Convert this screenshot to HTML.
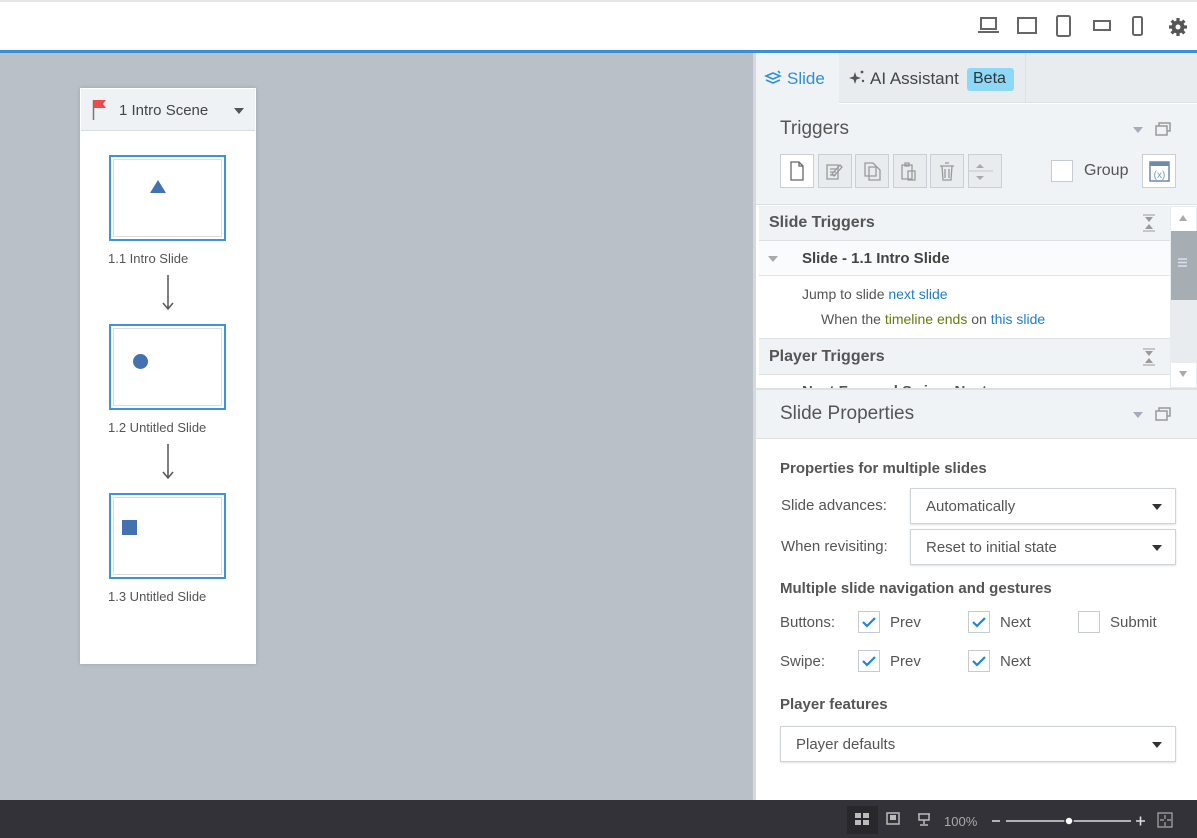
<!DOCTYPE html>
<html><head><meta charset="utf-8"><style>
*{box-sizing:border-box;margin:0;padding:0}
body{width:1197px;height:838px;overflow:hidden;position:relative;font-family:"Liberation Sans",sans-serif;color:#444;background:#fff}
.a{position:absolute}
.t{position:absolute;white-space:nowrap}
.btn{position:absolute;top:154px;width:34px;height:34px;border:1px solid #c9cfd4;background:#e9ecef}
.cb{position:absolute;width:22px;height:22px;border:1px solid #c5cbd0;background:#fff}
.sel{position:absolute;left:910px;width:266px;height:36px;border:1px solid #cfd4d8;background:#fff;font-size:15px;color:#555;padding:9px 15px;box-shadow:0 1px 2px rgba(0,0,0,.12)}
.arr{position:absolute;right:13px;top:15px;border-left:5px solid transparent;border-right:5px solid transparent;border-top:6px solid #333}
</style></head><body>
<!-- top bar -->
<div class="a" style="left:0;top:0;width:1197px;height:2px;background:#e4e6e8"></div>
<div class="a" style="left:0;top:50px;width:1197px;height:3px;background:#3a8fd8"></div>
<svg class="a" style="left:975px;top:12px" width="215" height="28" fill="none" stroke="#666" stroke-width="2">
<rect x="6" y="6" width="15" height="11"/><path d="M3 20h21"/>
<rect x="43" y="6" width="18" height="15"/>
<rect x="82" y="4" width="13" height="20" rx="1.5"/>
<rect x="119" y="9" width="16" height="9"/>
<rect x="158" y="5" width="9" height="18" rx="1.5"/>
<g transform="translate(203,15)" fill="#555" stroke="none"><circle r="6.5"/><g stroke="#555" stroke-width="3.2"><path d="M0-9V9M-9 0H9M-6.4-6.4L6.4 6.4M6.4-6.4L-6.4 6.4"/></g><circle r="2.5" fill="#fff"/></g>
</svg>
<!-- canvas -->
<div class="a" style="left:0;top:53px;width:753px;height:747px;background:#b9c0c8"></div>
<div class="a" style="left:80px;top:88px;width:176px;height:576px;background:#fff;box-shadow:0 0 4px rgba(0,0,0,.15)"></div>
<div class="a" style="left:81px;top:89px;width:174px;height:42px;background:#eef2f5;border-bottom:1px solid #d8dde1"></div>
<svg class="a" style="left:92px;top:99px" width="16" height="22"><path d="M1.5 1v20" stroke="#777" stroke-width="1.5"/><path d="M2 1h12l-3 4 3 4H2z" fill="#e84c4c"/></svg>
<div class="t" style="left:119px;top:102px;font-size:15px;color:#444">1 Intro Scene</div>
<div class="a" style="left:234px;top:108px;border-left:5px solid transparent;border-right:5px solid transparent;border-top:6px solid #555"></div>
<div class="a" style="left:109px;top:155px;width:117px;height:86px;border:2px solid #3d94dc;background:#fff"><div class="a" style="left:2px;top:2px;right:2px;bottom:2px;border:1px solid #ddd"></div></div>
<div class="a" style="left:150px;top:180px;border-left:8px solid transparent;border-right:8px solid transparent;border-bottom:13px solid #4472b0"></div>
<div class="t" style="left:108px;top:251px;font-size:13px;color:#555">1.1 Intro Slide</div>
<svg class="a" style="left:162px;top:275px" width="12" height="38"><path d="M6 0v34M1 28l5 6 5-6" stroke="#555" stroke-width="1.5" fill="none"/></svg>
<div class="a" style="left:109px;top:324px;width:117px;height:86px;border:2px solid #3d94dc;background:#fff"><div class="a" style="left:2px;top:2px;right:2px;bottom:2px;border:1px solid #ddd"></div></div>
<div class="a" style="left:133px;top:354px;width:15px;height:15px;border-radius:50%;background:#4472b0"></div>
<div class="t" style="left:108px;top:420px;font-size:13px;color:#555">1.2 Untitled Slide</div>
<svg class="a" style="left:162px;top:444px" width="12" height="38"><path d="M6 0v34M1 28l5 6 5-6" stroke="#555" stroke-width="1.5" fill="none"/></svg>
<div class="a" style="left:109px;top:493px;width:117px;height:86px;border:2px solid #3d94dc;background:#fff"><div class="a" style="left:2px;top:2px;right:2px;bottom:2px;border:1px solid #ddd"></div></div>
<div class="a" style="left:122px;top:520px;width:15px;height:15px;background:#4472b0"></div>
<div class="t" style="left:108px;top:589px;font-size:13px;color:#555">1.3 Untitled Slide</div>
<!-- right panel -->
<div class="a" style="left:753px;top:53px;width:444px;height:747px;background:#fff;border-left:3px solid #d6dade"></div>
<div class="a" style="left:756px;top:53px;width:441px;height:50px;background:#e8ecef;border-bottom:1px solid #dde1e4"></div>
<div class="a" style="left:756px;top:53px;width:83px;height:51px;background:#eff3f6"></div>
<div class="a" style="left:1025px;top:53px;width:1px;height:50px;background:#dde1e4"></div>
<svg class="a" style="left:764px;top:70px" width="18" height="16" fill="none" stroke="#2f8fd8" stroke-width="1.6"><path d="M2 6l7-3 7 3-7 3z M2 10l7 3 7-3 M14 1l2 2"/></svg>
<div class="t" style="left:787px;top:69px;font-size:17px;color:#2f8fd8">Slide</div>
<svg class="a" style="left:848px;top:69px" width="18" height="18" fill="#555"><path d="M7 3l1.5 4.5L13 9l-4.5 1.5L7 15l-1.5-4.5L1 9l4.5-1.5z"/><circle cx="14" cy="3" r="1.4"/><circle cx="15" cy="12" r="1.2"/></svg>
<div class="t" style="left:870px;top:69px;font-size:17px;color:#444">AI Assistant</div>
<div class="a" style="left:967px;top:68px;width:47px;height:23px;background:#8ed8f7;border-radius:3px;font-size:16px;color:#333;padding:2px 0 0 6px">Beta</div>
<div class="a" style="left:756px;top:104px;width:441px;height:100px;background:#eff3f6"></div>
<div class="t" style="left:780px;top:118px;font-size:19px;color:#555">Triggers</div>
<div class="a" style="left:1133px;top:127px;border-left:5px solid transparent;border-right:5px solid transparent;border-top:6px solid #aab"></div>
<svg class="a" style="left:1155px;top:121px" width="16" height="16" fill="none" stroke="#999" stroke-width="1.5"><rect x="1" y="5" width="11" height="9"/><path d="M4 5V2h11v8h-3"/></svg>
<div class="btn" style="left:780px;background:#fff"></div>
<div class="btn" style="left:818px"></div>
<div class="btn" style="left:855px"></div>
<div class="btn" style="left:893px"></div>
<div class="btn" style="left:930px"></div>
<div class="btn" style="left:968px"></div>
<svg class="a" style="left:780px;top:154px" width="224" height="34" fill="none" stroke="#666" stroke-width="1.3">
<path d="M11 8h8l4 4v14H11z M19 8v4h4"/>
<path d="M47 11h11v14H47z M50 15h6M50 18h6M50 21h6" stroke="#999"/><path d="M52 20l8-9 2 2-8 9z" stroke="#999"/>
<path d="M85 9h8l3 3v10H85z M89 13h8l3 3v10H89z" stroke="#999"/>
<path d="M122 11h10v14h-10z M125 9h4v3h-4z M128 17h7v9h-7z" stroke="#999"/>
<path d="M160 12h14M162 12l1 14h8l1-14M165 9h4M165 15v9M169 15v9" stroke="#999"/>
<path d="M200 10l-4 4h8zM200 26l-4-4h8z" fill="#aaa" stroke="none"/><path d="M189 17h24" stroke="#ccc"/>
</svg>
<div class="cb" style="left:1051px;top:160px"></div>
<div class="t" style="left:1084px;top:162px;font-size:16px;color:#555">Group</div>
<div class="a" style="left:1142px;top:154px;width:34px;height:34px;border:1px solid #c9cfd4;background:#fff"></div>
<svg class="a" style="left:1149px;top:161px" width="21" height="21"><rect x="1" y="1" width="19" height="19" fill="none" stroke="#6f8aa8" stroke-width="1.5"/><rect x="1" y="1" width="19" height="4" fill="#6f8aa8"/><text x="10.5" y="17" font-size="10" text-anchor="middle" fill="#6f9ccc" font-family="Liberation Sans">(x)</text></svg>
<!-- trigger list -->
<div class="a" style="left:756px;top:204px;width:441px;height:186px;background:#fff;border-top:1px solid #dde1e4"></div>
<div class="a" style="left:759px;top:206px;width:411px;height:35px;background:#eff3f6;border-bottom:1px solid #dde1e4"></div>
<div class="t" style="left:769px;top:214px;font-size:16px;font-weight:bold;color:#555">Slide Triggers</div>
<svg class="a" style="left:1142px;top:214px" width="14" height="18" fill="#999"><path d="M1 1h12M1 17h12" stroke="#999"/><path d="M3 3h8l-4 5zM3 15h8l-4-5z"/></svg>
<div class="a" style="left:759px;top:241px;width:411px;height:35px;background:#fafbfc;border-bottom:1px solid #e3e6e9"></div>
<div class="a" style="left:768px;top:256px;border-left:5px solid transparent;border-right:5px solid transparent;border-top:6px solid #aaa"></div>
<div class="t" style="left:802px;top:250px;font-size:15px;font-weight:bold;color:#444">Slide - 1.1 Intro Slide</div>
<div class="t" style="left:802px;top:286px;font-size:14px;color:#555">Jump to slide <span style="color:#1e7fc7">next slide</span></div>
<div class="t" style="left:821px;top:311px;font-size:14px;color:#555">When the <span style="color:#6a7a10">timeline ends</span> on <span style="color:#1e7fc7">this slide</span></div>
<div class="a" style="left:759px;top:338px;width:411px;height:37px;background:#eff3f6;border-top:1px solid #dde1e4;border-bottom:1px solid #dde1e4"></div>
<div class="t" style="left:769px;top:348px;font-size:16px;font-weight:bold;color:#555">Player Triggers</div>
<div class="a" style="left:759px;top:375px;width:411px;height:13px;overflow:hidden"><div class="t" style="left:43px;top:8px;font-size:15px;font-weight:bold;color:#555">Next Forward Swipe: Next</div></div>
<svg class="a" style="left:1142px;top:348px" width="14" height="18" fill="#999"><path d="M1 1h12M1 17h12" stroke="#999"/><path d="M3 3h8l-4 5zM3 15h8l-4-5z"/></svg>
<div class="a" style="left:1170px;top:206px;width:27px;height:182px;background:#e9ecef"></div>
<div class="a" style="left:1171px;top:207px;width:25px;height:24px;background:#fff"></div>
<div class="a" style="left:1179px;top:215px;border-left:4px solid transparent;border-right:4px solid transparent;border-bottom:6px solid #aaa"></div>
<div class="a" style="left:1171px;top:231px;width:26px;height:69px;background:#a7aeb3"></div>
<svg class="a" style="left:1177px;top:258px" width="12" height="10"><path d="M1 1h9M1 4.5h9M1 8h9" stroke="#dde" stroke-width="1.5"/></svg>
<div class="a" style="left:1171px;top:363px;width:25px;height:24px;background:#fff"></div>
<div class="a" style="left:1179px;top:371px;border-left:4px solid transparent;border-right:4px solid transparent;border-top:6px solid #aaa"></div>
<!-- properties -->
<div class="a" style="left:756px;top:388px;width:441px;height:51px;background:#eff3f6;border-top:2px solid #dde1e4;border-bottom:1px solid #dde1e4"></div>
<div class="t" style="left:780px;top:403px;font-size:19px;color:#555">Slide Properties</div>
<div class="a" style="left:1133px;top:412px;border-left:5px solid transparent;border-right:5px solid transparent;border-top:6px solid #aab"></div>
<svg class="a" style="left:1155px;top:406px" width="16" height="16" fill="none" stroke="#999" stroke-width="1.5"><rect x="1" y="5" width="11" height="9"/><path d="M4 5V2h11v8h-3"/></svg>
<div class="t" style="left:780px;top:460px;font-size:15px;font-weight:bold;color:#555">Properties for multiple slides</div>
<div class="t" style="left:781px;top:497px;font-size:15px;color:#555">Slide advances:</div>
<div class="sel" style="top:488px">Automatically<div class="arr"></div></div>
<div class="t" style="left:781px;top:538px;font-size:15px;color:#555">When revisiting:</div>
<div class="sel" style="top:529px">Reset to initial state<div class="arr"></div></div>
<div class="t" style="left:780px;top:580px;font-size:15px;font-weight:bold;color:#555">Multiple slide navigation and gestures</div>
<div class="t" style="left:780px;top:614px;font-size:15px;color:#555">Buttons:</div>
<div class="t" style="left:780px;top:653px;font-size:15px;color:#555">Swipe:</div>
<div class="cb" style="left:858px;top:611px"></div><div class="cb" style="left:968px;top:611px"></div><div class="cb" style="left:1078px;top:611px"></div>
<div class="cb" style="left:858px;top:650px"></div><div class="cb" style="left:968px;top:650px"></div>
<svg class="a" style="left:858px;top:611px" width="140" height="62" fill="none" stroke="#1e86d6" stroke-width="2.2"><path d="M5 11l4 4 8-8M115 11l4 4 8-8M5 50l4 4 8-8M115 50l4 4 8-8"/></svg>
<div class="t" style="left:890px;top:614px;font-size:15px;color:#555">Prev</div>
<div class="t" style="left:1000px;top:614px;font-size:15px;color:#555">Next</div>
<div class="t" style="left:1110px;top:614px;font-size:15px;color:#555">Submit</div>
<div class="t" style="left:890px;top:653px;font-size:15px;color:#555">Prev</div>
<div class="t" style="left:1000px;top:653px;font-size:15px;color:#555">Next</div>
<div class="t" style="left:780px;top:696px;font-size:15px;font-weight:bold;color:#555">Player features</div>
<div class="sel" style="top:726px;left:780px;width:396px">Player defaults<div class="arr"></div></div>
<!-- bottom bar -->
<div class="a" style="left:0;top:800px;width:1197px;height:38px;background:#333238"></div>
<div class="a" style="left:847px;top:806px;width:31px;height:28px;background:#28272c"></div>
<svg class="a" style="left:840px;top:800px" width="357" height="38" fill="#bbb">
<rect x="15" y="13" width="6" height="5"/><rect x="23" y="13" width="6" height="5"/><rect x="15" y="20" width="6" height="5"/><rect x="23" y="20" width="6" height="5"/>
<path d="M47 13h12v11H47z" fill="none" stroke="#bbb" stroke-width="1.5"/><rect x="50" y="15" width="6" height="5"/>
<path d="M78 14h12M79 14v6h10v-6M84 20v4M80 25h8" fill="none" stroke="#bbb" stroke-width="1.5"/>
<text x="104" y="26" font-size="13" fill="#aaa" font-family="Liberation Sans">100%</text>
<path d="M152 21h8M166 21h125M296 21h9M300.5 16.5v9" stroke="#ddd" stroke-width="1.6"/>
<circle cx="229" cy="21" r="4" fill="#fff" stroke="#333" stroke-width="1.5"/>
<path d="M318 13h14v14h-14z M325 15v4M325 22v4M320 20h4M327 20h4" fill="none" stroke="#aaa" stroke-width="1.2"/>
</svg>
</body></html>
